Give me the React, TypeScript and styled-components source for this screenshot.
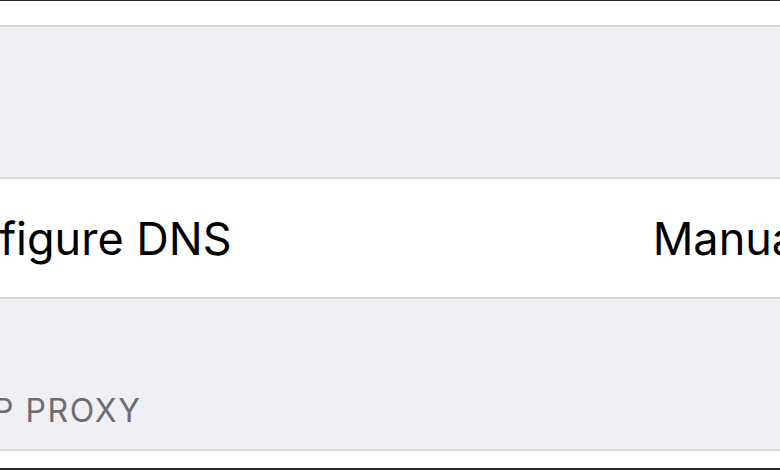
import styled, { createGlobalStyle } from "styled-components"

const Global = createGlobalStyle`
  html, body {
    margin: 0;
    padding: 0;
    background: #ffffff;
    overflow: hidden;
  }
`

const Frame = styled.div`
  width: 780px;
  height: 470px;
  box-sizing: border-box;
  border-top: 1px solid #2a2a2a;
  border-bottom: 2px solid #2a2a2a;
  overflow: hidden;
  display: flex;
  flex-direction: column;
  font-family: Inter, "Liberation Sans", sans-serif;
`

// the screenshot is a crop of a wider list, so the sheet hangs past both edges
const Sheet = styled.div`
  margin-left: -121px;
  width: calc(100% + 121px + 68px);
  display: flex;
  flex-direction: column;
`

const Cap = styled.div<{ $h: number }>`
  height: ${(p) => p.$h}px;
  background: #ffffff;
`

const Divider = styled.div`
  height: 2px;
  background: #d8d8dc;
`

const Group = styled.div<{ $h: number }>`
  height: ${(p) => p.$h}px;
  background: #efeff4;
  display: flex;
  align-items: flex-end;
  padding-left: 44px;
`

const SectionTitle = styled.span`
  font-size: 32px;
  letter-spacing: 1.6px;
  color: #6d6d72;
  line-height: 1;
  margin-bottom: 22px;
`

const Row = styled.div`
  height: 118px;
  background: #ffffff;
  display: flex;
  align-items: center;
  justify-content: space-between;
  padding: 0 40px 0 34px;
  font-size: 45px;
  color: #000000;
`

const Label = styled.span`
  line-height: 1;
`

const Value = styled.span`
  line-height: 1;
`

export default function App() {
  return (
    <>
      <Global />
      <Frame>
        <Sheet>
          <Cap $h={24} />
          <Divider />
          <Group $h={150} />
          <Divider />
          <Row>
            <Label>Configure DNS</Label>
            <Value>Manual</Value>
          </Row>
          <Divider />
          <Group $h={150}>
            <SectionTitle>HTTP PROXY</SectionTitle>
          </Group>
          <Divider />
          <Cap $h={17} />
        </Sheet>
      </Frame>
    </>
  )
}
